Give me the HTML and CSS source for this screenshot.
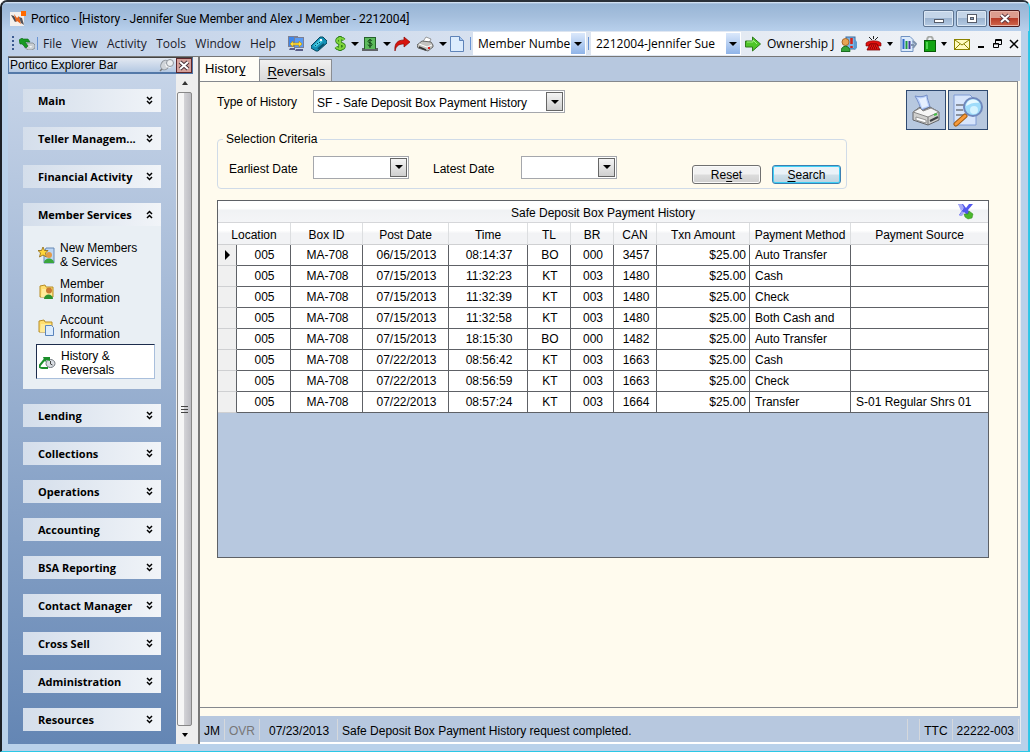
FILE: index.html
```html
<!DOCTYPE html>
<html lang="en">
<head>
    <meta charset="UTF-8">
    <meta name="viewport" content="width=device-width, initial-scale=1.0">
    <link rel="stylesheet" href="styles.css">
    <title>Portico - History</title>
</head>
<body>
    <div class="window">
        <header class="title-bar">
            <svg class="app-icon" width="16" height="16" viewBox="0 0 16 16">
                <rect y="1" width="14" height="14" fill="#f4f0ec"/>
                <path d="M1 4l3 1 3 5-2 1z" fill="#4a4a50"/>
                <path d="M4 3l3 4 2-2 2 8-4-3-1 1z" fill="#e8641b"/>
                <path d="M9 6l3 1 2 7-3-2z" fill="#54545c"/>
                <rect x="11" y="0" width="5" height="5" fill="#ff6a00"/>
            </svg>
            <h1>Portico - [History - Jennifer Sue Member and Alex J Member - 2212004]</h1>
            <div class="window-buttons">
                <button aria-label="Minimize"><svg width="12" height="12" viewBox="0 0 12 12"><rect x="1.500" y="6.500" width="9" height="3" fill="#fff" stroke="#555b68"/></svg></button>
                <button aria-label="Restore"><svg width="12" height="12" viewBox="0 0 12 12"><rect x="1.500" y="1.500" width="9" height="8" fill="#fff" stroke="#555b68"/><rect x="4.500" y="4.500" width="3" height="2" fill="#8da6c4" stroke="#555b68"/></svg></button>
                <button class="close" aria-label="Close"><svg width="12" height="12" viewBox="0 0 12 12"><path d="M2 2l8 7M10 2l-8 7" stroke="#5d3a42" stroke-width="4"/><path d="M2 2l8 7M10 2l-8 7" stroke="#fff" stroke-width="2"/></svg></button>
            </div>
        </header>

        <div class="menu-bar">
            <span class="grip"></span>
            <button class="tool" aria-label="History">
                <svg width="16" height="12" viewBox="0 0 16 12"><path d="M8 5h6l2 2v3l-3 2H9L5 9z" fill="#c9ced3" stroke="#7e858c" stroke-width=".8"/><path d="M10 8h3l-1 2z" fill="#f5f7f8"/><path d="M0 2l3-2 1 1h5l2 3H6l3 4-2 2-4-4H1z" fill="#179a22" stroke="#0b6414" stroke-width=".6"/></svg>
            </button>
            <span class="sep"></span>
            <nav class="menu">
                <a href="#">File</a>
                <a href="#">View</a>
                <a href="#">Activity</a>
                <a href="#">Tools</a>
                <a href="#">Window</a>
                <a href="#">Help</a>
            </nav>
            <div class="tools">
                <button class="tool" aria-label="Connect">
                    <svg width="16" height="16" viewBox="0 0 16 16"><rect x=".5" y=".5" width="9" height="10" fill="#3f86ea" stroke="#7b8096"/><rect x="6.500" y="1.500" width="9" height="10" fill="#5a9bf4" stroke="#7b8096"/><path d="M2 12h5v2H1zM8 13h7v2H7z" fill="#5a5f88"/><path d="M2 8l3-3v2h6V5l3 3-3 3V9H5v2z" fill="#ffe03a" stroke="#b98a10" stroke-width=".6"/></svg>
                </button>
                <button class="tool" aria-label="Calculator">
                    <svg width="16" height="16" viewBox="0 0 16 16"><path d="M0 10l9-9h3l4 4v2l-9 8H5l-5-3z" fill="#1490b6" stroke="#07485f"/><path d="M2 10l7-7 3 2-7 6z" fill="#47c8e0"/><path d="M4 9l1 1M6 7l1 1M8 6l1 1" stroke="#064a60"/><rect x="9" y="3" width="2" height="2" fill="#fff"/><path d="M7 13l6-5" stroke="#0a5470" stroke-width="2"/></svg>
                </button>
                <button class="tool with-arrow" aria-label="Cash">
                    <svg width="12" height="16" viewBox="0 0 12 16"><path d="M10 4c-2-3-7-2-7 1s7 2 7 5-6 4-8 1M6 0v15" stroke="#2b7d18" stroke-width="3.500" fill="none"/><path d="M10 4c-2-3-7-2-7 1s7 2 7 5-6 4-8 1M6 1v13" stroke="#7ed43c" stroke-width="2" fill="none"/></svg>
                    <i class="arrow"></i>
                </button>
                <button class="tool with-arrow" aria-label="Teller">
                    <svg width="16" height="16" viewBox="0 0 16 16"><rect x="2.500" y="1.500" width="11" height="12" fill="#5cba5c" stroke="#24622a"/><path d="M0 12h2v1h12v-1h2v3H0z" fill="#606468"/><path d="M10 5c-1-2-4-1-4 .5s4 1 4 3-4 2-4 0M8 3v9" stroke="#0d3c12" fill="none"/></svg>
                    <i class="arrow"></i>
                </button>
                <button class="tool" aria-label="Forward">
                    <svg width="16" height="16" viewBox="0 0 16 16"><path d="M1 15C0 7 4 4 10 4V1l6 5-6 5V8C6 8 2 9 1 15z" fill="#d8130c" stroke="#8a0a05" stroke-width=".7"/></svg>
                </button>
                <button class="tool with-arrow" aria-label="Print">
                    <svg width="17" height="16" viewBox="0 0 17 16"><path d="M5 7l4-6 5 2-3 6z" fill="#fff" stroke="#777" stroke-width=".7"/><path d="M0 9l5-4 9 1 2 3v2l-5 4-10-3z" fill="#c4c4c0" stroke="#4d4d4a" stroke-width=".8"/><path d="M2 8l8 3 5-2" stroke="#fff" fill="none"/><path d="M2 11l7 3" stroke="#333" stroke-width="1.500"/><rect x="11" y="11" width="2" height="2" fill="#d22"/></svg>
                    <i class="arrow"></i>
                </button>
                <button class="tool" aria-label="New">
                    <svg width="14" height="16" viewBox="0 0 14 16"><path d="M.5 .5h9l4 4v11H.5z" fill="#dcecfd" stroke="#5e83b8"/><path d="M9.500 .5v4h4" fill="#a5c4ec" stroke="#5e83b8"/></svg>
                </button>
            </div>
            <span class="sep"></span>
            <div class="tool-combo type">
                <select aria-label="Search type"><option>Member Numbe</option></select>
                <span class="drop"><i class="arrow"></i></span>
            </div>
            <span class="sep"></span>
            <div class="tool-combo member">
                <select aria-label="Member"><option>2212004-Jennifer Sue</option></select>
                <span class="drop"><i class="arrow"></i></span>
            </div>
            <button class="tool go" aria-label="Go">
                <svg width="16" height="16" viewBox="0 0 16 16"><path d="M.5 5h7V1l8 7-8 7v-4h-7z" fill="#4fc528" stroke="#2f7a1c"/><path d="M2 6h6V4l4 4" stroke="#a4f084" fill="none"/></svg>
            </button>
            <span class="ownership">Ownership J</span>
            <div class="tools right">
                <button class="tool" aria-label="Alerts">
                    <svg width="17" height="16" viewBox="0 0 17 16"><rect x="5" y="1" width="9" height="12" fill="#7ab2e4" stroke="#3a6a9c"/><path d="M13 2l3 4v6l-3 2z" fill="#5d9bcf"/><path d="M10.500 2v6M10.500 10v2" stroke="#d62317" stroke-width="2.500"/><circle cx="4.500" cy="6" r="3.500" fill="#e8a352" stroke="#a8682a"/><path d="M0 15.500c0-7 9-7 9 0z" fill="#35a53a" stroke="#1b6d20"/></svg>
                </button>
                <button class="tool with-arrow" aria-label="Phone">
                    <svg width="17" height="16" viewBox="0 0 17 16"><path d="M1 7c3-3 12-3 15 0v3h-4V8H5v2H1z" fill="#e01010" stroke="#700" stroke-width=".6"/><path d="M5 8h7l3 6H2z" fill="#e01010" stroke="#700" stroke-width=".8"/><path d="M6 10h5M5 12h7" stroke="#500" stroke-dasharray="1 1"/><path d="M4 1l3 3M8.500 0v3M13 1l-3 3" stroke="#222"/></svg>
                    <i class="arrow"></i>
                </button>
                <button class="tool" aria-label="Reports">
                    <svg width="17" height="16" viewBox="0 0 17 16"><path d="M1 .5h9l3 3v12H1z" fill="#dcebfb" stroke="#7092c2"/><path d="M3.500 3v10" stroke="#2b65ca" stroke-width="2"/><path d="M6.500 5v8" stroke="#1c9a3b" stroke-width="2"/><path d="M9.500 5v8" stroke="#433a9c" stroke-width="2"/><path d="M11 9h3M13 5l3 3-3 4" fill="none" stroke="#7f93ad" stroke-width="2"/></svg>
                </button>
                <button class="tool with-arrow" aria-label="Security">
                    <svg width="12" height="16" viewBox="0 0 12 16"><path d="M3 5c0-6 6-6 6 0" fill="none" stroke="#a8aca8" stroke-width="2"/><rect x=".5" y="4.500" width="11" height="11" fill="#12a312" stroke="#075c07"/><path d="M3 6v7" stroke="#4ed44e" stroke-width="2"/></svg>
                    <i class="arrow"></i>
                </button>
                <button class="tool mail" aria-label="Mail">
                    <svg width="16" height="12" viewBox="0 0 16 12"><rect x=".5" y="1.500" width="15" height="10" fill="#fffbc0" stroke="#8a8200"/><path d="M1 2l7 5 7-5M1 11l5-5M15 11l-5-5" fill="none" stroke="#8a8200"/></svg>
                </button>
                <button class="tool" aria-label="Minimize document"><svg width="8" height="12" viewBox="0 0 8 12"><path d="M1 9h6" stroke="#000" stroke-width="2"/></svg></button>
                <button class="tool" aria-label="Restore document"><svg width="10" height="12" viewBox="0 0 10 12"><path d="M3.500 5V1.500h6v5H7M3 2.500h7" fill="none" stroke="#000"/><path d="M1.500 5.500h5v4h-5zM1 6h6" fill="none" stroke="#000"/></svg></button>
                <button class="tool" aria-label="Close document"><svg width="10" height="12" viewBox="0 0 10 12"><path d="M1 2l8 8M9 2l-8 8" stroke="#000" stroke-width="1.500"/></svg></button>
            </div>
        </div>

        <div class="workspace">
            <aside class="explorer">
                <div class="explorer-head">
                    <h2>Portico Explorer Bar</h2>
                    <button class="pin" aria-label="Pin"><svg width="15" height="14" viewBox="0 0 15 14"><path d="M1 13l5-5" stroke="#777" stroke-width="1.500"/><ellipse cx="6" cy="7" rx="4" ry="5" transform="rotate(30 6 7)" fill="#d0d4d9" stroke="#8f959d"/><path d="M6 6l4-1 3 3-2 2-4-1z" fill="#f3f4f6"/><circle cx="11" cy="5" r="3.500" fill="#eceef0" stroke="#8f959d"/></svg></button>
                    <button class="close-bar" aria-label="Close explorer bar"><svg width="14" height="13" viewBox="0 0 14 13"><path d="M3 3l8 7M11 3l-8 7" stroke="#49323a" stroke-width="4"/><path d="M3 3l8 7M11 3l-8 7" stroke="#fff" stroke-width="2"/></svg></button>
                </div>
                <div class="explorer-body">
                    <div class="groups">
                        <button class="group"><span>Main</span><svg class="chev" width="7" height="9" viewBox="0 0 7 9"><path d="M1 1l2.500 2.500L6 1M1 5l2.500 2.500L6 5"/></svg></button>
                        <button class="group"><span>Teller Managem...</span><svg class="chev" width="7" height="9" viewBox="0 0 7 9"><path d="M1 1l2.500 2.500L6 1M1 5l2.500 2.500L6 5"/></svg></button>
                        <button class="group"><span>Financial Activity</span><svg class="chev" width="7" height="9" viewBox="0 0 7 9"><path d="M1 1l2.500 2.500L6 1M1 5l2.500 2.500L6 5"/></svg></button>
                        <div class="open-group">
                            <button class="group"><span>Member Services</span><svg class="chev" width="7" height="9" viewBox="0 0 7 9"><path d="M1 4l2.500-2.500L6 4M1 8l2.500-2.500L6 8"/></svg></button>
                            <div class="links">
                                <a href="#">
                                    <svg width="17" height="17" viewBox="0 0 17 17"><path d="M8 1h8v15H6V6z" fill="#bcd6f4" stroke="#6688b4"/><path d="M5 0l1.500 3.500H10L7.500 6l1 4L5 8l-3.500 2 1-4L0 3.500h3.500z" fill="#ffd53a" stroke="#8a6410" stroke-width=".8"/><circle cx="11" cy="8" r="3" fill="#e39a48"/><path d="M6 16c0-6 10-6 10 0z" fill="#3aa63c"/></svg>
                                    <span>New Members<br>&amp; Services</span>
                                </a>
                                <a href="#">
                                    <svg width="17" height="17" viewBox="0 0 17 17"><path d="M2 3l5-1 1 2h7v10H2z" fill="#ffdf70" stroke="#b78d26"/><path d="M4 6h10v8H3z" fill="#ffeb9a"/><circle cx="11" cy="7.500" r="3" fill="#c97a32"/><path d="M6 16c0-6 9-6 9 0z" fill="#2c922f"/></svg>
                                    <span>Member<br>Information</span>
                                </a>
                                <a href="#">
                                    <svg width="17" height="17" viewBox="0 0 17 17"><path d="M1 2l5-1 1 2h7v10H1z" fill="#ffdf70" stroke="#b78d26"/><path d="M3 5h10v8H2z" fill="#ffeb9a"/><path d="M7.500 6.500h6l2 2v8h-8z" fill="#dcecfd" stroke="#5a84bc"/></svg>
                                    <span>Account<br>Information</span>
                                </a>
                                <a href="#" class="selected">
                                    <svg width="17" height="14" viewBox="0 0 17 14"><ellipse cx="11.500" cy="7.500" rx="4.500" ry="4" fill="#d9dde3" stroke="#737980"/><path d="M11.500 5v3l2 1" fill="none" stroke="#444"/><path d="M6 3L1 9c-1 2 0 3 2 3h6" fill="none" stroke="#1b8e2b" stroke-width="2"/><path d="M4 1h7v4L8 4 6 6z" fill="#1b8e2b"/></svg>
                                    <span>History &amp;<br>Reversals</span>
                                </a>
                            </div>
                        </div>
                        <button class="group"><span>Lending</span><svg class="chev" width="7" height="9" viewBox="0 0 7 9"><path d="M1 1l2.500 2.500L6 1M1 5l2.500 2.500L6 5"/></svg></button>
                        <button class="group"><span>Collections</span><svg class="chev" width="7" height="9" viewBox="0 0 7 9"><path d="M1 1l2.500 2.500L6 1M1 5l2.500 2.500L6 5"/></svg></button>
                        <button class="group"><span>Operations</span><svg class="chev" width="7" height="9" viewBox="0 0 7 9"><path d="M1 1l2.500 2.500L6 1M1 5l2.500 2.500L6 5"/></svg></button>
                        <button class="group"><span>Accounting</span><svg class="chev" width="7" height="9" viewBox="0 0 7 9"><path d="M1 1l2.500 2.500L6 1M1 5l2.500 2.500L6 5"/></svg></button>
                        <button class="group"><span>BSA Reporting</span><svg class="chev" width="7" height="9" viewBox="0 0 7 9"><path d="M1 1l2.500 2.500L6 1M1 5l2.500 2.500L6 5"/></svg></button>
                        <button class="group"><span>Contact Manager</span><svg class="chev" width="7" height="9" viewBox="0 0 7 9"><path d="M1 1l2.500 2.500L6 1M1 5l2.500 2.500L6 5"/></svg></button>
                        <button class="group"><span>Cross Sell</span><svg class="chev" width="7" height="9" viewBox="0 0 7 9"><path d="M1 1l2.500 2.500L6 1M1 5l2.500 2.500L6 5"/></svg></button>
                        <button class="group"><span>Administration</span><svg class="chev" width="7" height="9" viewBox="0 0 7 9"><path d="M1 1l2.500 2.500L6 1M1 5l2.500 2.500L6 5"/></svg></button>
                        <button class="group"><span>Resources</span><svg class="chev" width="7" height="9" viewBox="0 0 7 9"><path d="M1 1l2.500 2.500L6 1M1 5l2.500 2.500L6 5"/></svg></button>
                    </div>
                    <div class="scrollbar">
                        <button aria-label="Scroll up"><i class="arrow up"></i></button>
                        <div class="thumb"><i></i><i></i><i></i></div>
                        <button aria-label="Scroll down"><i class="arrow"></i></button>
                    </div>
                </div>
            </aside>

            <main class="main">
                <div class="tabs">
                    <button class="tab active">Histor<u>y</u></button>
                    <button class="tab"><u>R</u>eversals</button>
                </div>
                <div class="panel">
                    <div class="top-row">
                        <label for="type">Type of History</label>
                        <div class="combo wide">
                            <select id="type"><option>SF - Safe Deposit Box Payment History</option></select>
                            <span class="drop"><i class="arrow"></i></span>
                        </div>
                        <div class="big-buttons">
                            <button aria-label="Print">
                                <svg width="28" height="32" viewBox="0 0 28 32">
                                    <path d="M3 2c4 1 8 1 12-1 0 4 2 7 3 12l-9 3C8 12 6 7 3 2z" fill="#b9d0fa" stroke="#7790c8"/>
                                    <path d="M6 4c3 1 5 0 8-1 0 4 2 7 2 9l-6 2C9 10 8 7 6 4z" fill="#e6f0ff"/>
                                    <path d="M1 18l7-5 2 4 8-4 9 5v8l-11 5-15-5z" fill="#d0d0ce" stroke="#64666a"/>
                                    <path d="M1 18l7-4 3 3 8-3 8 4-11 5z" fill="#f6f6f5" stroke="#888"/>
                                    <path d="M16 23v8" stroke="#777"/>
                                    <path d="M4 23l10 3v3L4 26z" fill="#fff" stroke="#777" stroke-width=".7"/>
                                    <path d="M18 27l8-4" stroke="#3f4246" stroke-width="2"/>
                                    <path d="M22 21l3-1" stroke="#44c044" stroke-width="2"/>
                                </svg>
                            </button>
                            <button aria-label="Preview">
                                <svg width="32" height="34" viewBox="0 0 32 34">
                                    <path d="M2 2h16l6 6v24H2z" fill="#d7e5fb" stroke="#7e9bd4"/>
                                    <path d="M4 12h8M4 17h7M4 22h9" stroke="#8b93a0" stroke-width="2"/>
                                    <path d="M4 31l9-8" stroke="#a25d14" stroke-width="5" stroke-linecap="round"/>
                                    <path d="M4 31l9-8" stroke="#f79a3a" stroke-width="3" stroke-linecap="round"/>
                                    <circle cx="21" cy="14" r="9" fill="#9fdcfa" stroke="#6f88bd" stroke-width="2"/>
                                    <path d="M14 13c1-8 11-8 13-3-4-1-8 0-13 3z" fill="#e8f9ff"/>
                                    <circle cx="22" cy="17" r="4" fill="#d4f3ff"/>
                                </svg>
                            </button>
                        </div>
                    </div>

                    <fieldset class="criteria">
                        <legend>Selection Criteria</legend>
                        <label for="earliest">Earliest Date</label>
                        <div class="combo">
                            <input type="text" id="earliest">
                            <button class="drop" aria-label="Pick earliest date"><i class="arrow"></i></button>
                        </div>
                        <label for="latest" class="latest">Latest Date</label>
                        <div class="combo">
                            <input type="text" id="latest">
                            <button class="drop" aria-label="Pick latest date"><i class="arrow"></i></button>
                        </div>
                        <div class="actions">
                            <button class="btn">Re<u>s</u>et</button>
                            <button class="btn primary"><u>S</u>earch</button>
                        </div>
                    </fieldset>

                    <div class="grid">
                        <div class="grid-title">
                            <span id="grid-name">Safe Deposit Box Payment History</span>
                            <button class="export" aria-label="Export">
                                <svg width="18" height="18" viewBox="0 0 18 18"><path d="M1 2h5l3 4 3-4h4l-5 6 3 4-4 1-3-3-3 3H2l4-6z" fill="#5358ee"/><path d="M1 2h4l2 4-3 3zM2 14l3-5 2 2-2 3z" fill="#a5a8f6"/><path d="M7 12h4l1-3 4 3-1 4-4 1-3-2z" fill="#4cb82c" stroke="#2c8a1a" stroke-width=".5"/></svg>
                            </button>
                        </div>
                        <table aria-labelledby="grid-name">
                            <colgroup>
                                <col class="c-mark"><col class="c-loc"><col class="c-box"><col class="c-date"><col class="c-time">
                                <col class="c-small"><col class="c-small"><col class="c-small"><col class="c-amount"><col class="c-method"><col>
                            </colgroup>
                            <thead>
                                <tr><th colspan="2">Location</th><th>Box ID</th><th>Post Date</th><th>Time</th><th>TL</th><th>BR</th><th>CAN</th><th>Txn Amount</th><th>Payment Method</th><th>Payment Source</th></tr>
                            </thead>
                            <tbody>
                                <tr><td class="mark"><i class="arrow current"></i></td><td>005</td><td>MA-708</td><td>06/15/2013</td><td>08:14:37</td><td>BO</td><td>000</td><td>3457</td><td>$25.00</td><td>Auto Transfer</td><td></td></tr>
                                <tr><td class="mark"></td><td>005</td><td>MA-708</td><td>07/15/2013</td><td>11:32:23</td><td>KT</td><td>003</td><td>1480</td><td>$25.00</td><td>Cash</td><td></td></tr>
                                <tr><td class="mark"></td><td>005</td><td>MA-708</td><td>07/15/2013</td><td>11:32:39</td><td>KT</td><td>003</td><td>1480</td><td>$25.00</td><td>Check</td><td></td></tr>
                                <tr><td class="mark"></td><td>005</td><td>MA-708</td><td>07/15/2013</td><td>11:32:58</td><td>KT</td><td>003</td><td>1480</td><td>$25.00</td><td>Both Cash and</td><td></td></tr>
                                <tr><td class="mark"></td><td>005</td><td>MA-708</td><td>07/15/2013</td><td>18:15:30</td><td>BO</td><td>000</td><td>1482</td><td>$25.00</td><td>Auto Transfer</td><td></td></tr>
                                <tr><td class="mark"></td><td>005</td><td>MA-708</td><td>07/22/2013</td><td>08:56:42</td><td>KT</td><td>003</td><td>1663</td><td>$25.00</td><td>Cash</td><td></td></tr>
                                <tr><td class="mark"></td><td>005</td><td>MA-708</td><td>07/22/2013</td><td>08:56:59</td><td>KT</td><td>003</td><td>1663</td><td>$25.00</td><td>Check</td><td></td></tr>
                                <tr><td class="mark"></td><td>005</td><td>MA-708</td><td>07/22/2013</td><td>08:57:24</td><td>KT</td><td>003</td><td>1664</td><td>$25.00</td><td>Transfer</td><td>S-01 Regular Shrs 01</td></tr>
                            </tbody>
                        </table>
                    </div>
                </div>
                <footer class="status-bar">
                    <span>JM</span>
                    <span class="off">OVR</span>
                    <span class="date">07/23/2013</span>
                    <span class="message">Safe Deposit Box Payment History request completed.</span>
                    <span class="blank"></span>
                    <span>TTC</span>
                    <span>22222-003</span>
                </footer>
            </main>
        </div>
    </div>
</body>
</html>
```
FILE: styles.css
```css
* {
    box-sizing: border-box;
}

body {
    margin: 0;
    font-family: "Liberation Sans", Arial, sans-serif;
    font-size: 12px;
    line-height: 14px;
    color: #000;
}

button,
input,
select {
    font: inherit;
    color: inherit;
    border: none;
    background: none;
    padding: 0;
    margin: 0;
    border-radius: 0;
}

select {
    appearance: none;
}

svg {
    display: block;
    flex: none;
}

.window {
    display: flex;
    flex-direction: column;
    min-height: 100vh;
    padding: 0 8px 7px 6px;
    background-color: #b9d1ea;
    border: 1px solid #2ac8e6;
    border-top: 2px solid #2a3038;
    border-left: 2px solid #1c2026;
    border-radius: 7px 7px 0 0;
    box-shadow: inset -1px 0 #35c5e8;
}

/* title bar */
.title-bar {
    display: flex;
    align-items: center;
    height: 29px;
    margin: 0 -8px 0 -6px;
    padding: 4px 9px 0 8px;
    gap: 5px;
    background: linear-gradient(#e3eefa 0, #98b5d5 2px, #a5bfdd 50%, #b8d0ec);
    border-radius: 6px 6px 0 0;
    font-family: Roboto, sans-serif;
}

.title-bar h1 {
    margin: 0;
    font-size: 12px;
    font-weight: normal;
    flex: 1;
    white-space: nowrap;
}

.window-buttons {
    display: flex;
    gap: 2px;
}

.window-buttons button {
    display: flex;
    align-items: center;
    justify-content: center;
    width: 31px;
    height: 17px;
    border: 1px solid #5e7592;
    border-radius: 2px;
    background: linear-gradient(#c4d5e8 45%, #9cb4d0 50%, #b5cbe4);
    box-shadow: inset 0 0 0 1px #dbe7f4;
}

.window-buttons .close {
    border-color: #4d1a1c;
    background: linear-gradient(#dc9c8e 45%, #b83c28 50%, #d0664c);
    box-shadow: inset 0 0 0 1px #e8b4a8;
}

/* menu and tools */
.menu-bar {
    display: flex;
    align-items: center;
    height: 26px;
    padding: 0 2px 0 4px;
    background: linear-gradient(90deg, #bfd0e8, #f2f4f7);
    border-bottom: 1px solid #777;
    font-family: "Open Sans", sans-serif;
    font-size: 12px;
}

.grip {
    width: 2px;
    height: 15px;
    margin-right: 5px;
    background: repeating-linear-gradient(#3c5a90 0 2px, transparent 2px 4px);
}

.sep {
    width: 1px;
    height: 13px;
    margin: 0 2px;
    background-color: #6a94d4;
}

.menu {
    display: flex;
    justify-content: space-between;
    width: 233px;
    margin-left: 3px;
}

.menu a {
    color: #1b1b2a;
    text-decoration: none;
}

.tools {
    display: flex;
    align-items: center;
    gap: 7px;
    margin: 0 4px 0 12px;
}

.tools.right {
    margin: 0 0 0 auto;
}

.tool {
    display: flex;
    align-items: center;
    gap: 5px;
}

.tool.with-arrow {
    margin-right: -4px;
}

.tools.right .with-arrow,
.tools.right .mail {
    margin-right: 0;
}

.arrow {
    width: 0;
    height: 0;
    border: 4px solid transparent;
    border-top-color: #000;
    border-bottom: none;
}

.arrow.up {
    border-top: none;
    border-bottom: 4px solid #333;
}

.arrow.current {
    display: block;
    margin: 0 auto;
    border: 5px solid transparent;
    border-left-color: #000;
    border-right: none;
}

.scrollbar .arrow,
.tools.right .arrow {
    border-left-width: 3px;
    border-right-width: 3px;
}

.tool-combo {
    display: flex;
    height: 23px;
    padding: 1px;
    background-color: #fff;
}

.tool-combo.type {
    width: 113px;
}

.tool-combo.member {
    width: 150px;
}

.tool-combo select {
    flex: 1;
    min-width: 0;
    padding-left: 4px;
}

.tool-combo .drop {
    display: flex;
    align-items: center;
    justify-content: center;
    width: 14px;
    background: linear-gradient(#dbe8fb, #8fb4e8);
}

.go {
    margin: 0 6px 0 4px;
}

.ownership {
    white-space: nowrap;
}

/* explorer bar */
.workspace {
    display: flex;
    flex: 1;
}

.explorer {
    display: flex;
    flex-direction: column;
    flex: 0 0 192px;
    border-right: 2px solid #777;
    background-color: #eee;
}

.explorer-head {
    display: flex;
    align-items: center;
    height: 17px;
    margin-right: 5px;
    padding-left: 1px;
    background: linear-gradient(#e3e9f2, #b4c8e2);
    border: 1px solid #5378a8;
    border-top-color: #444;
    border-bottom-width: 2px;
}

.explorer-head h2 {
    margin: 0;
    flex: 1;
    font-size: 12px;
    font-weight: normal;
}

.close-bar {
    border: 1px solid #5d262b;
    background-color: #d5a09a;
    margin-left: 2px;
}

.explorer-body {
    display: flex;
    flex: 1;
}

.groups {
    display: flex;
    flex-direction: column;
    gap: 15px;
    flex: 1;
    padding: 15px 15px 10px;
    background: linear-gradient(#c6d4e8, #6486b4);
}

.group {
    display: flex;
    align-items: center;
    justify-content: space-between;
    width: 100%;
    height: 23px;
    padding: 0 8px 0 15px;
    background: linear-gradient(90deg, #d4deeb, #f1f4f8);
    font-family: "Open Sans", sans-serif;
    font-size: 11px;
    font-weight: bold;
}

.chev {
    fill: none;
    stroke: #000;
    stroke-width: 1.5;
}

.links {
    display: flex;
    flex-direction: column;
    gap: 1px;
    padding: 10px 6px 10px 13px;
    background-color: #e9eff4;
}

.links a {
    display: flex;
    align-items: center;
    gap: 5px;
    height: 35px;
    padding: 3px 0 0 2px;
    color: #000;
    text-decoration: none;
}

.links .selected {
    background-color: #fff;
    border: 1px solid #a9bfdc;
    border-left-color: #1c2c4c;
    border-top-color: #1c2c4c;
}

.scrollbar {
    display: flex;
    flex-direction: column;
    width: 22px;
    padding: 0 6px 0 1px;
    background-color: #eee;
}

.scrollbar button {
    display: flex;
    align-items: center;
    justify-content: center;
    height: 18px;
}

.scrollbar .thumb {
    display: flex;
    flex-direction: column;
    align-items: center;
    justify-content: center;
    gap: 2px;
    flex: 1;
    border: 1px solid #888;
    border-radius: 2px;
    background: linear-gradient(90deg, #f6f6f6 45%, #d2d2d6 50%, #bcbcc2);
}

.thumb i {
    width: 7px;
    height: 1px;
    background-color: #444;
}

/* main area */
.main {
    display: flex;
    flex-direction: column;
    flex: 1;
    min-width: 0;
    background-color: #fffbee;
    border-right: 1px solid #e8ecf2;
    border-bottom: 2px solid #fff;
}

.tabs {
    display: flex;
    align-items: flex-end;
    height: 24px;
    background-color: #b7c8df;
}

.tab {
    height: 22px;
    padding: 2px 6px 0 7px;
    font-size: 13px;
    background-color: #e0e0e0;
    border: 1px solid #8a8d92;
    border-bottom: none;
    background-image: linear-gradient(#f0f0f0, #d9d9d9);
}

.tab.active {
    height: 24px;
    padding: 0 14px 0 5px;
    background: #fffdf6;
    border: none;
}

u {
    text-underline-offset: 2px;
}

.panel {
    flex: 1;
    margin: 0 2px 8px 0;
    padding: 8px 28px 20px 17px;
    border: 1px solid #85888d;
    border-left: none;
}

.top-row {
    display: flex;
    align-items: flex-start;
}

.top-row label {
    width: 96px;
    padding-top: 5px;
}

.combo {
    display: flex;
    width: 96px;
    height: 23px;
    padding: 1px;
    background-color: #fff;
    border: 1px solid #a5a7ac;
}

.combo.wide {
    width: 252px;
}

.combo select,
.combo input {
    flex: 1;
    min-width: 0;
    padding: 2px 0 0 2px;
}

.combo .drop {
    display: flex;
    align-items: center;
    justify-content: center;
    width: 17px;
    background: linear-gradient(#f4f4f4, #cfcfcf);
    border: 1px solid #666;
}

.big-buttons {
    display: flex;
    gap: 2px;
    margin: 0 1px 0 auto;
}

.big-buttons button {
    display: flex;
    align-items: center;
    justify-content: center;
    width: 40px;
    height: 40px;
    background-color: #b7c8df;
    border: 1px solid #2f4a70;
}

.criteria {
    display: flex;
    align-items: center;
    max-width: 630px;
    height: 57px;
    margin: 2px 0 11px;
    padding: 0 5px 0 11px;
    border: 1px solid #d0dbe8;
    border-radius: 4px;
}

.criteria legend {
    margin-left: -6px;
    padding: 0 3px;
}

.criteria label {
    width: 84px;
    padding-top: 3px;
}

.criteria .latest {
    width: 88px;
    margin-left: 24px;
}

.actions {
    display: flex;
    gap: 11px;
    margin: 14px 0 0 auto;
}

.btn {
    width: 69px;
    height: 19px;
    padding-top: 2px;
    border: 1px solid #707070;
    border-radius: 3px;
    background: linear-gradient(#f2f2f2 48%, #dcdcdc 52%, #cfcfcf);
    box-shadow: inset 0 0 0 1px #fafafa;
}

.btn.primary {
    border-color: #3c7fb1;
    background: linear-gradient(#eaf2f8 48%, #cfe0ea 52%, #bdd3e0);
    box-shadow: inset 0 0 0 1px #3fd0f6;
}

/* results */
.grid {
    min-height: 358px;
    background-color: #b7c8df;
    border: 1px solid #5e6166;
}

.grid-title {
    display: flex;
    align-items: center;
    justify-content: center;
    position: relative;
    height: 22px;
    padding-top: 2px;
    background: linear-gradient(#fff 35%, #f0f2f4 45%, #f4f5f7);
    border-bottom: 1px solid #d5d6d9;
}

.export {
    position: absolute;
    right: 13px;
    top: 1px;
}

table {
    width: 100%;
    table-layout: fixed;
    border-collapse: separate;
    border-spacing: 0;
    background-color: #fff;
}

.c-mark { width: 19px; }
.c-loc { width: 54px; }
.c-box { width: 72px; }
.c-date { width: 86px; }
.c-time { width: 79px; }
.c-small { width: 43px; }
.c-amount { width: 93px; }
.c-method { width: 101px; }

th {
    height: 22px;
    padding: 2px 0 0;
    font-weight: normal;
    white-space: nowrap;
    background: linear-gradient(#fff 35%, #f2f3f5 50%, #f2f3f5);
    border-right: 1px solid #dcdee0;
    border-bottom: 1px solid #cfd0d2;
}

td {
    height: 21px;
    padding: 0 0 0 2px;
    text-align: center;
    white-space: nowrap;
    overflow: hidden;
    border-right: 1px solid #5e6166;
    border-bottom: 1px solid #5e6166;
}

th:last-child,
td:last-child {
    border-right: none;
}

td.mark {
    padding: 0;
    background-color: #f0f0f0;
    border-bottom-color: #cfd0d2;
}

td:nth-child(9) {
    text-align: right;
    padding-right: 3px;
}

td:nth-child(10),
td:nth-child(11) {
    text-align: left;
    padding-left: 5px;
}

/* status bar */
.status-bar {
    display: flex;
    align-items: center;
    height: 26px;
    padding: 2px 1px 1px 0;
    background-color: #b7c8df;
}

.status-bar span {
    display: flex;
    align-items: center;
    height: 21px;
    padding: 2px 4px 0;
    border-right: 1px solid #d5d8dc;
    white-space: nowrap;
}

.status-bar .off {
    color: #777;
}

.status-bar .date {
    padding: 2px 8px 0 9px;
}

.status-bar .message {
    flex: 1;
}

.status-bar .blank {
    width: 12px;
}
```
